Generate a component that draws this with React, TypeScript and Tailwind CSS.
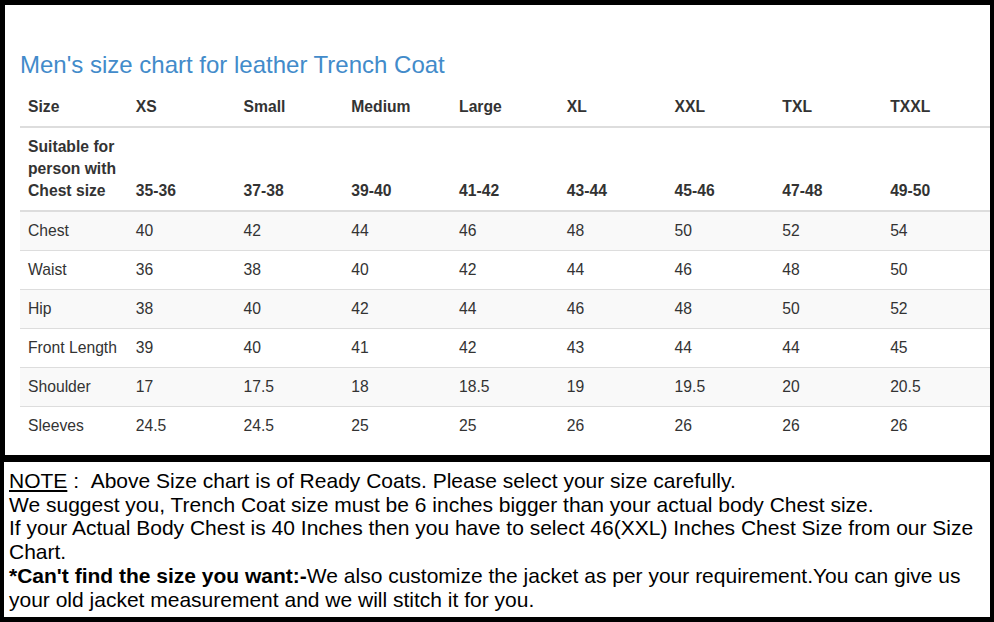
import React from 'react';

const sizes = ['XS', 'Small', 'Medium', 'Large', 'XL', 'XXL', 'TXL', 'TXXL'];
const chestRanges = ['35-36', '37-38', '39-40', '41-42', '43-44', '45-46', '47-48', '49-50'];

const rows: [string, string[]][] = [
    ['Chest', ['40', '42', '44', '46', '48', '50', '52', '54']],
    ['Waist', ['36', '38', '40', '42', '44', '46', '48', '50']],
    ['Hip', ['38', '40', '42', '44', '46', '48', '50', '52']],
    ['Front Length', ['39', '40', '41', '42', '43', '44', '44', '45']],
    ['Shoulder', ['17', '17.5', '18', '18.5', '19', '19.5', '20', '20.5']],
    ['Sleeves', ['24.5', '24.5', '25', '25', '26', '26', '26', '26']],
];

const SizeTable: React.FC = () => (
    <table className="table-fixed w-[970px] border-collapse text-[15.7px] text-[#333]">
        <thead>
            <tr className="border-b-2 border-[#ddd]">
                <th className="text-left font-bold px-2 py-2 leading-[22px]">Size</th>
                {sizes.map(s => (
                    <th key={s} className="text-left font-bold px-2 py-2 leading-[22px]">{s}</th>
                ))}
            </tr>
            <tr className="border-b-2 border-[#ddd]">
                <th className="text-left align-bottom font-bold pl-2 pr-1 pt-2 pb-2 leading-[22px]">
                    Suitable for person with Chest size
                </th>
                {chestRanges.map(c => (
                    <th key={c} className="text-left align-bottom font-bold px-2 pt-2 pb-2 leading-[22px]">{c}</th>
                ))}
            </tr>
        </thead>
        <tbody>
            {rows.map(([label, values], i) => (
                <tr key={label} className={`${i > 0 ? 'border-t border-[#ddd]' : ''} ${i % 2 === 0 ? 'bg-[#f9f9f9]' : 'bg-white'}`}>
                    <td className="px-2 py-2 leading-[22px] whitespace-nowrap">{label}</td>
                    {values.map((v, j) => (
                        <td key={j} className="px-2 py-2 leading-[22px]">{v}</td>
                    ))}
                </tr>
            ))}
        </tbody>
    </table>
);

export default function App() {
    return (
        <div className="w-[994px] h-[622px] bg-black flex flex-col" style={{ fontFamily: '"Liberation Sans", Arial, sans-serif' }}>
            {/* chart panel */}
            <div className="ml-[5px] mt-[5px] w-[985px] h-[450px] bg-white pl-[15px] pt-[47px]">
                <h3 className="text-[24px] leading-[26px] mb-[10px] text-[#428bca]">
                    Men's size chart for leather Trench Coat
                </h3>
                <SizeTable />
            </div>

            {/* note panel */}
            <div className="ml-[4px] mt-[7px] w-[986px] h-[155px] bg-white pl-[5px] pt-[7px] text-[21px] leading-[23.7px] text-black">
                <div><span className="underline">NOTE</span>&nbsp;:&nbsp;&nbsp;Above Size chart is of Ready Coats. Please select your size carefully.</div>
                <div>We suggest you, Trench Coat size must be 6 inches bigger than your actual body Chest size.</div>
                <div>If your Actual Body Chest is 40 Inches then you have to select 46(XXL) Inches Chest Size from our Size</div>
                <div>Chart.</div>
                <div><span className="font-bold">*Can't find the size you want:-</span>We also customize the jacket as per your requirement.You can give us</div>
                <div>your old jacket measurement and we will stitch it for you.</div>
            </div>
        </div>
    );
}
